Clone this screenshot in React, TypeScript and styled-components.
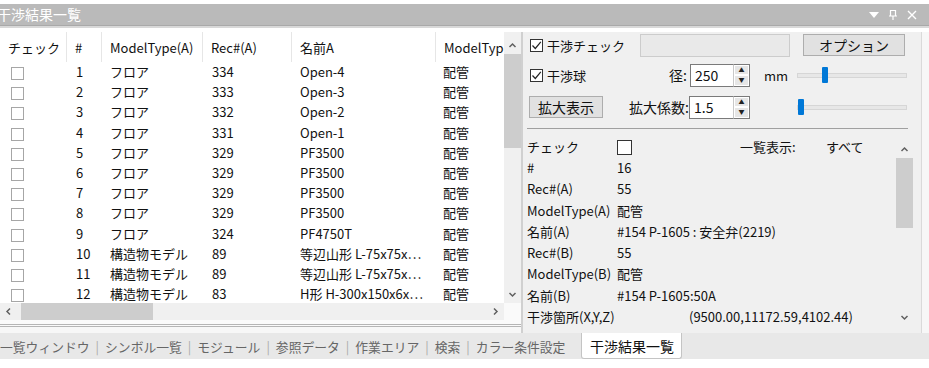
import styled, { createGlobalStyle } from 'styled-components'

const GlobalStyle = createGlobalStyle`
  body {
    margin: 0;
    background: #ffffff;
    font-family: "Noto Sans CJK JP", "Noto Sans", sans-serif;
    font-size: 13px;
    color: #111;
  }
`

const Window = styled.div`
  width: 929px;
  height: 368px;
  display: flex;
  flex-direction: column;
  overflow: hidden;
  background: #fff;
`

const TitleBar = styled.div`
  margin-top: 4px;
  height: 21px;
  background: #bababa;
  display: flex;
  align-items: center;
  justify-content: space-between;
  color: #fff;
  font-size: 14px;
  border-bottom: 1px solid #a9a9a9;
`

const TitleText = styled.span`
  margin-left: -3px;
  line-height: 21px;
`

const TitleButtons = styled.div`
  display: flex;
  align-items: center;
  gap: 10px;
  padding-right: 12px;
`

const Divider = styled.div`
  height: 4px;
  background: #fff;
  border-top: 2px solid #d8d8d8;
`

const Main = styled.div`
  display: flex;
  height: 301px;
  background: #f7f7f7;
`

const ListPane = styled.div`
  width: 521px;
  flex: none;
  display: flex;
  flex-direction: column;
  background: #fafafa;
  border-bottom: 3px double #b5b5b5;
  box-sizing: border-box;
  height: 295px;
`

const ListArea = styled.div`
  height: 271px;
  display: flex;
`

const Grid = styled.div`
  flex: 1;
  min-width: 0;
  overflow: hidden;
  background: #fff;
`

const cols = '67px 35px 101px 89px 144px 120px'

const HeaderRow = styled.div`
  display: grid;
  grid-template-columns: ${cols};
  height: 30px;
  align-items: center;
  white-space: nowrap;
`

const HeaderCell = styled.div<{ $last?: boolean }>`
  height: 100%;
  display: flex;
  align-items: center;
  padding-left: 8px;
  border-right: ${(p) => (p.$last ? 'none' : '1px solid #e6e6e6')};
  overflow: hidden;
`

const Row = styled.div`
  display: grid;
  grid-template-columns: ${cols};
  height: 20.2px;
  align-items: center;
`

const Cell = styled.div<{ $pad?: number }>`
  min-width: 0;
  padding-left: ${(p) => p.$pad ?? 8}px;
  white-space: nowrap;
  line-height: 20px;
`

const Box = styled.span<{ $dark?: boolean; $size?: number }>`
  display: inline-block;
  flex: none;
  width: ${(p) => p.$size ?? 13}px;
  height: ${(p) => p.$size ?? 13}px;
  box-sizing: border-box;
  border: 1px solid ${(p) => (p.$dark ? '#333' : '#a6a6a6')};
  background: #fff;
  vertical-align: middle;
  position: relative;
`

const VScroll = styled.div<{ $top?: number }>`
  width: 17px;
  flex: none;
  background: #f0f0f0;
  display: flex;
  flex-direction: column;
  padding-top: ${(p) => p.$top ?? 0}px;
`

const Arrow = styled.div`
  height: 17px;
  width: 17px;
  flex: none;
  display: flex;
  align-items: center;
  justify-content: center;
`

const Thumb = styled.div<{ $len: number }>`
  width: 17px;
  height: ${(p) => p.$len}px;
  background: #cdcdcd;
`

const Spacer = styled.div`
  flex: 1;
`

const HScroll = styled.div`
  height: 17px;
  display: flex;
  align-items: center;
  background: #f0f0f0;
  margin-right: 17px;
`

const HThumb = styled.div`
  width: 132px;
  height: 17px;
  margin-left: 4px;
  background: #cdcdcd;
`

const RightPane = styled.div`
  width: 401px;
  flex: none;
  box-sizing: border-box;
  background: #f0f0f0;
  border-left: 2px solid #d0d0d0;
  border-right: 1px solid #dadada;
  display: flex;
  flex-direction: column;
  padding-right: 8px;
`

const Controls = styled.div`
  padding: 1px 0 0 5px;
  display: grid;
  grid-template-columns: 87px 135px 47px 111px;
  grid-template-rows: 24px 36px 28px;
  align-items: center;
`

const CheckLabel = styled.label`
  display: flex;
  align-items: center;
  gap: 4px;
  padding-left: 2px;
  font-size: 13px;
  white-space: nowrap;
`

const CheckMark = () => (
  <svg width="11" height="11" viewBox="0 0 11 11" style={{ position: 'absolute', left: 0, top: 0 }}>
    <path d="M1.5 5.5 L4.3 8.5 L9.8 1.8" fill="none" stroke="#222" strokeWidth="1.2" />
  </svg>
)

const Disabled = styled.div`
  grid-column: 2 / 4;
  width: 150px;
  height: 23px;
  margin-left: 25px;
  box-sizing: border-box;
  border: 1px solid #cccccc;
  background: #e9e9e9;
`

const Button = styled.div<{ $w: number; $ml?: number }>`
  width: ${(p) => p.$w}px;
  height: 22px;
  margin-left: ${(p) => p.$ml ?? 0}px;
  box-sizing: border-box;
  border: 1px solid #adadad;
  background: #e1e1e1;
  display: flex;
  align-items: center;
  justify-content: center;
  font-size: 14px;
  white-space: nowrap;
`

const FieldGroup = styled.div`
  display: flex;
  align-items: center;
  justify-content: flex-end;
  font-size: 14px;
  white-space: nowrap;
`

const Input = styled.div<{ $w: number }>`
  width: ${(p) => p.$w}px;
  height: 23px;
  box-sizing: border-box;
  border: 1px solid #7a7a7a;
  border-right: none;
  background: #fff;
  padding-left: 4px;
  display: flex;
  align-items: center;
  font-size: 14px;
`

const Spin = styled.div`
  width: 17px;
  height: 23px;
  box-sizing: border-box;
  border: 1px solid #7a7a7a;
  border-left: 1px solid #c8c8c8;
  background: #fff;
  display: flex;
  flex-direction: column;
`

const SpinPart = styled.div`
  flex: 1;
  margin: 1px;
  background: #e6e6e6;
  display: flex;
  align-items: center;
  justify-content: center;
  font-size: 6px;
  line-height: 1;
  color: #222;
`

const Unit = styled.span`
  padding-left: 14px;
  font-size: 13px;
`

const Track = styled.div<{ $pos: number }>`
  width: 108px;
  height: 3px;
  background: #e7e7e7;
  border: 1px solid #d6d6d6;
  position: relative;
  &::after {
    content: '';
    position: absolute;
    left: ${(p) => p.$pos}px;
    top: -7px;
    width: 6px;
    height: 16px;
    background: #0078d7;
    border-radius: 1px;
  }
`

const Separator = styled.div`
  margin: 7px 5px 0 4px;
  height: 1px;
  background: #a0a0a0;
`

const Details = styled.div`
  flex: 1;
  display: flex;
  padding-top: 6px;
  min-height: 0;
`

const DetailList = styled.div`
  flex: 1;
  padding-left: 4px;
  display: flex;
  flex-direction: column;
`

const DetailRow = styled.div<{ $label?: number }>`
  display: grid;
  grid-template-columns: ${(p) => p.$label ?? 90}px 1fr;
  height: 21.25px;
  align-items: center;
  white-space: nowrap;
  font-size: 13px;
`

const TopDetail = styled.div`
  display: grid;
  grid-template-columns: 90px 123px 86px 1fr;
  height: 22px;
  align-items: center;
  font-size: 13px;
`

const DetailScroll = styled(VScroll)`
  margin-top: 6px;
  height: 185px;
`

const Tabs = styled.div`
  height: 26px;
  background: #e8e8e8;
  display: flex;
  align-items: stretch;
  font-size: 12.8px;
  color: #666;
`

const Tab = styled.div`
  display: flex;
  align-items: center;
  white-space: nowrap;
`

const ActiveTab = styled.div`
  width: 99px;
  margin-left: 16px;
  display: flex;
  align-items: center;
  justify-content: center;
  background: #fff;
  color: #111;
  font-size: 14px;
  border: 1px solid #c4c4c4;
  border-top: none;
  border-radius: 0 0 3px 3px;
  white-space: nowrap;
`

const Pipe = styled.span`
  color: #aaa;
  margin: 0 6px;
`

const Chevron = ({ dir }: { dir: 'up' | 'down' | 'left' | 'right' }) => {
  const rot = { up: 0, right: 90, down: 180, left: 270 }[dir]
  return (
    <svg width="9" height="9" viewBox="0 0 9 9" style={{ transform: `rotate(${rot}deg)` }}>
      <path d="M1.5 6 L4.5 3 L7.5 6" fill="none" stroke="#606060" strokeWidth="1.5" />
    </svg>
  )
}

// names are shown already shortened, as the list does in the window
const rows = [
  ['1', 'フロア', '334', 'Open-4'],
  ['2', 'フロア', '333', 'Open-3'],
  ['3', 'フロア', '332', 'Open-2'],
  ['4', 'フロア', '331', 'Open-1'],
  ['5', 'フロア', '329', 'PF3500'],
  ['6', 'フロア', '329', 'PF3500'],
  ['7', 'フロア', '329', 'PF3500'],
  ['8', 'フロア', '329', 'PF3500'],
  ['9', 'フロア', '324', 'PF4750T'],
  ['10', '構造物モデル', '89', '等辺山形 L-75x75x…'],
  ['11', '構造物モデル', '89', '等辺山形 L-75x75x…'],
  ['12', '構造物モデル', '83', 'H形 H-300x150x6x…'],
]

const details = [
  ['#', '16'],
  ['Rec#(A)', '55'],
  ['ModelType(A)', '配管'],
  ['名前(A)', '#154 P-1605 : 安全弁(2219)'],
  ['Rec#(B)', '55'],
  ['ModelType(B)', '配管'],
  ['名前(B)', '#154 P-1605:50A'],
]

const tabs = ['一覧ウィンドウ', 'シンボル一覧', 'モジュール', '参照データ', '作業エリア', '検索', 'カラー条件設定']

function App() {
  return (
    <>
      <GlobalStyle />
      <Window>
        <TitleBar>
          <TitleText>干渉結果一覧</TitleText>
          <TitleButtons>
            <svg width="10" height="6" viewBox="0 0 10 6">
              <path d="M0 0 H10 L5 6 Z" fill="#fff" />
            </svg>
            <svg width="8" height="10" viewBox="0 0 8 10">
              <path d="M1.5 0.5 H6.5 V6 H1.5 Z M0 6 H8 M4 6 V10" fill="none" stroke="#fff" strokeWidth="1.2" />
            </svg>
            <svg width="10" height="10" viewBox="0 0 10 10">
              <path d="M1 1 L9 9 M9 1 L1 9" stroke="#fff" strokeWidth="1.4" />
            </svg>
          </TitleButtons>
        </TitleBar>
        <Divider />
        <Main>
          <ListPane>
            <ListArea>
              <Grid>
                <HeaderRow>
                  <HeaderCell>チェック</HeaderCell>
                  <HeaderCell>#</HeaderCell>
                  <HeaderCell>ModelType(A)</HeaderCell>
                  <HeaderCell>Rec#(A)</HeaderCell>
                  <HeaderCell>名前A</HeaderCell>
                  <HeaderCell $last>ModelTyp</HeaderCell>
                </HeaderRow>
                {rows.map((r) => (
                  <Row key={r[0]}>
                    <Cell $pad={11}>
                      <Box />
                    </Cell>
                    <Cell $pad={9}>{r[0]}</Cell>
                    <Cell>{r[1]}</Cell>
                    <Cell $pad={9}>{r[2]}</Cell>
                    <Cell>{r[3]}</Cell>
                    <Cell $pad={7}>配管</Cell>
                  </Row>
                ))}
              </Grid>
              <VScroll $top={5}>
                <Arrow>
                  <Chevron dir="up" />
                </Arrow>
                <Thumb $len={94} />
                <Spacer />
                <Arrow>
                  <Chevron dir="down" />
                </Arrow>
              </VScroll>
            </ListArea>
            <HScroll>
              <Arrow>
                <Chevron dir="left" />
              </Arrow>
              <HThumb />
              <Spacer />
              <Arrow>
                <Chevron dir="right" />
              </Arrow>
            </HScroll>
          </ListPane>
          <RightPane>
            <Controls>
              <CheckLabel>
                <Box $dark>
                  <CheckMark />
                </Box>
                干渉チェック
              </CheckLabel>
              <Disabled />
              <Button $w={102} $ml={6}>
                オプション
              </Button>
              <CheckLabel>
                <Box $dark>
                  <CheckMark />
                </Box>
                干渉球
              </CheckLabel>
              <FieldGroup>
                径:&nbsp;
                <Input $w={43}>250</Input>
                <Spin>
                  <SpinPart>▲</SpinPart>
                  <SpinPart>▼</SpinPart>
                </Spin>
              </FieldGroup>
              <Unit>mm</Unit>
              <Track $pos={24} />
              <Button $w={74} $ml={1}>
                拡大表示
              </Button>
              <FieldGroup>
                拡大係数:
                <Input $w={44}>1.5</Input>
                <Spin>
                  <SpinPart>▲</SpinPart>
                  <SpinPart>▼</SpinPart>
                </Spin>
              </FieldGroup>
              <span />
              <Track $pos={0} />
            </Controls>
            <Separator />
            <Details>
              <DetailList>
                <TopDetail>
                  <span>チェック</span>
                  <span>
                    <Box $dark $size={15} />
                  </span>
                  <span>一覧表示:</span>
                  <span>すべて</span>
                </TopDetail>
                {details.map((d) => (
                  <DetailRow key={d[0]}>
                    <span>{d[0]}</span>
                    <span>{d[1]}</span>
                  </DetailRow>
                ))}
                <DetailRow $label={162}>
                  <span>干渉箇所(X,Y,Z)</span>
                  <span>(9500.00,11172.59,4102.44)</span>
                </DetailRow>
              </DetailList>
              <DetailScroll>
                <Arrow>
                  <Chevron dir="up" />
                </Arrow>
                <Thumb $len={70} />
                <Spacer />
                <Arrow>
                  <Chevron dir="down" />
                </Arrow>
              </DetailScroll>
            </Details>
          </RightPane>
        </Main>
        <Tabs>
          {tabs.map((t, i) => (
            <Tab key={t}>
              {t}
              {i < tabs.length - 1 && <Pipe>|</Pipe>}
            </Tab>
          ))}
          <ActiveTab>干渉結果一覧</ActiveTab>
        </Tabs>
      </Window>
    </>
  )
}

export default App
